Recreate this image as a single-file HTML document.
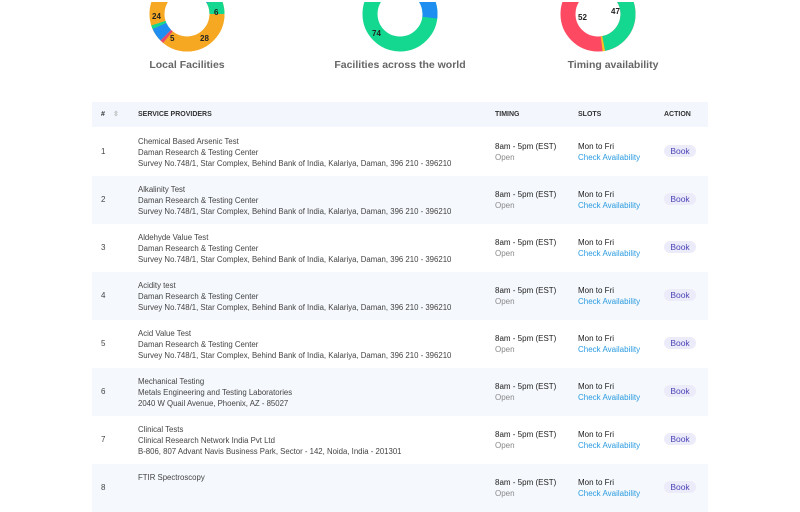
<!DOCTYPE html>
<html><head><meta charset="utf-8"><style>
*{margin:0;padding:0;box-sizing:border-box}
body{width:800px;height:480px;overflow:hidden;background:#fff;font-family:"Liberation Sans",sans-serif;position:relative;color:#333}
.lbl{position:absolute;top:59px;font-size:10.5px;font-weight:bold;color:#666;text-align:center;width:200px}
svg.d{position:absolute;top:2px}
.tbl{position:absolute;left:92px;top:102px;width:616px}
.hd{height:25px;background:#f3f6fc;position:relative;font-size:7px;font-weight:bold;color:#333}
.row{height:48px;position:relative;font-size:8px;color:#444}
.row.alt{background:#f5f8fc}
.a{position:absolute}
.t{line-height:11px}
.p{font-size:7.8px}
.gray{color:#888}
.blue{color:#2a9be0}
.book{position:absolute;left:572px;top:17px;width:32px;height:12px;border-radius:6px;background:#ecebfa;color:#4b45b5;font-size:8.5px;text-align:center;line-height:12px}
</style></head><body>
<svg class="d" style="left:148px" width="80" height="60" viewBox="0 0 80 60">
<g transform="rotate(-90 39 12)" fill="none" stroke-width="15">
<circle cx="39" cy="12" r="30" pathLength="100" stroke="#f7a823" stroke-dasharray="100 0"/>
<circle cx="39" cy="12" r="30" pathLength="100" stroke="#1e8ff0" stroke-dasharray="17 83"/>
<circle cx="39" cy="12" r="30" pathLength="100" stroke="#14d88f" stroke-dasharray="8 92" stroke-dashoffset="-17"/>
<circle cx="39" cy="12" r="30" pathLength="100" stroke="#f7a823" stroke-dasharray="36 64" stroke-dashoffset="-25"/>
<circle cx="39" cy="12" r="30" pathLength="100" stroke="#e84a6b" stroke-dasharray="1.5 98.5" stroke-dashoffset="-61"/>
<circle cx="39" cy="12" r="30" pathLength="100" stroke="#1e8ff0" stroke-dasharray="6 94" stroke-dashoffset="-62.5"/>
<circle cx="39" cy="12" r="30" pathLength="100" stroke="#14d88f" stroke-dasharray="1.5 98.5" stroke-dashoffset="-68.5"/>
</g>
<g font-size="8" font-weight="bold" fill="#222" font-family="Liberation Sans"><text x="4" y="17">24</text><text x="66" y="13">6</text><text x="22" y="39">5</text><text x="52" y="39">28</text></g>
</svg>
<svg class="d" style="left:360px" width="80" height="60" viewBox="0 0 80 60">
<g transform="rotate(-90 40 12)" fill="none" stroke-width="15">
<circle cx="40" cy="12" r="30" pathLength="100" stroke="#14d88f"/>
<circle cx="40" cy="12" r="30" pathLength="100" stroke="#1e8ff0" stroke-dasharray="27 73"/>
</g>
<text x="12" y="34" font-size="8" font-weight="bold" fill="#222" font-family="Liberation Sans">74</text>
</svg>
<svg class="d" style="left:558px" width="80" height="60" viewBox="0 0 80 60">
<g transform="rotate(-90 40 12)" fill="none" stroke-width="15">
<circle cx="40" cy="12" r="30" pathLength="100" stroke="#fd4a62"/>
<circle cx="40" cy="12" r="30" pathLength="100" stroke="#14d88f" stroke-dasharray="47 53"/>
<circle cx="40" cy="12" r="30" pathLength="100" stroke="#f7c322" stroke-dasharray="1 99" stroke-dashoffset="-47"/>
</g>
<g font-size="8" font-weight="bold" fill="#222" font-family="Liberation Sans"><text x="20" y="18">52</text><text x="53" y="12">47</text></g>
</svg>
<div class="lbl" style="left:87px">Local Facilities</div>
<div class="lbl" style="left:300px">Facilities across the world</div>
<div class="lbl" style="left:513px">Timing availability</div>

<div class="tbl">
<div class="hd"><span class="a" style="left:9px;top:9px">#</span><span class="a" style="left:21px;top:8px;color:#bbb;font-size:7px">⇳</span><span class="a" style="left:46px;top:9px">SERVICE PROVIDERS</span><span class="a" style="left:403px;top:9px">TIMING</span><span class="a" style="left:486px;top:9px">SLOTS</span><span class="a" style="left:572px;top:9px">ACTION</span></div>
<div style="height:1px"></div>
<div id="rows"></div>
</div>
<script>
var d=[["Chemical Based Arsenic Test","Daman Research &amp; Testing Center","Survey No.748/1, Star Complex, Behind Bank of India, Kalariya, Daman, 396 210 - 396210"],
["Alkalinity Test","Daman Research &amp; Testing Center","Survey No.748/1, Star Complex, Behind Bank of India, Kalariya, Daman, 396 210 - 396210"],
["Aldehyde Value Test","Daman Research &amp; Testing Center","Survey No.748/1, Star Complex, Behind Bank of India, Kalariya, Daman, 396 210 - 396210"],
["Acidity test","Daman Research &amp; Testing Center","Survey No.748/1, Star Complex, Behind Bank of India, Kalariya, Daman, 396 210 - 396210"],
["Acid Value Test","Daman Research &amp; Testing Center","Survey No.748/1, Star Complex, Behind Bank of India, Kalariya, Daman, 396 210 - 396210"],
["Mechanical Testing","Metals Engineering and Testing Laboratories","2040 W Quail Avenue, Phoenix, AZ - 85027"],
["Clinical Tests","Clinical Research Network India Pvt Ltd","B-806, 807 Advant Navis Business Park, Sector - 142, Noida, India - 201301"],
["FTIR Spectroscopy","",""]];
var h="";d.forEach(function(r,i){h+='<div class="row'+(i%2?' alt':'')+'"><span class="a" style="left:9px;top:19px">'+(i+1)+'</span><div class="a t p" style="left:46px;top:8px">'+r[0]+'<br>'+r[1]+'<br>'+r[2]+'</div><div class="a t" style="left:403px;top:13px;color:#222">8am - 5pm (EST)<br><span class="gray">Open</span></div><div class="a t" style="left:486px;top:13px;color:#222">Mon to Fri<br><span class="blue">Check Availability</span></div><div class="book">Book</div></div>'});
document.getElementById("rows").innerHTML=h;
</script>
</body></html>
